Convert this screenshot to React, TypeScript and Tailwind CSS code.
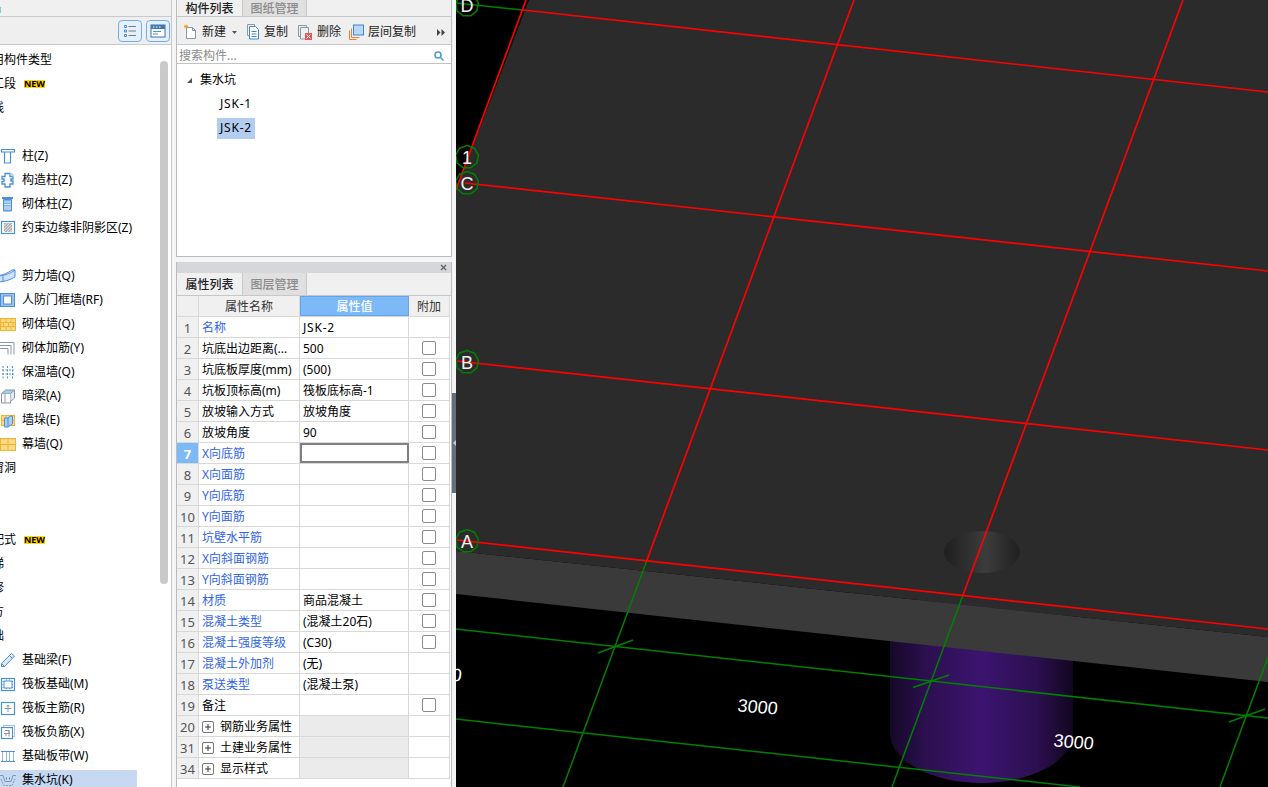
import React from "react";

const BLUE = "#4a8fd8";
const ORANGE = "#f6b326";
const GRAY = "#8a97a6";

// icons of the component tree, all in a 16 box
function TreeIcon({ name }: { name: string }) {
  const icons: Record<string, React.ReactNode> = {
    column: (
      <g fill="none" stroke={BLUE} strokeWidth="1.2">
        <path d="M1.5 1.5h13v2.5h-13z" />
        <path d="M4.5 4v11h6V4" />
      </g>
    ),
    knot: (
      <g fill="#fff" stroke={BLUE} strokeWidth="1.3">
        <path d="M5 1.5h5v3h3v2.5h-2v2h2v3h-3v3H5v-3H2V9.500h2V7H2V4.500h3z" />
        <path d="M10 1.500c2 0 3 1 3 3" stroke="#b8c8da" />
      </g>
    ),
    masonry: (
      <g>
        <path d="M2 1h11v2H2z" fill={BLUE} />
        <path d="M3.500 3.500h8V15h-8z" fill="#7fb2e8" stroke={BLUE} />
        <path d="M4 6h7M4 8.500h7M4 11h7M4 13h7" stroke="#dcebfa" />
      </g>
    ),
    hatch: (
      <g>
        <rect x="1.500" y="1.500" width="13" height="12" fill="#fff" stroke={BLUE} strokeWidth="1.2" />
        <path d="M4 3h8v9H4z" fill="#b5b5b5" />
        <path d="M4 6l3-3M4 9l6-6M4 12l8-8M7 12l5-5M10 12l2-2" stroke="#e6e6e6" strokeWidth=".8" />
      </g>
    ),
    wall: (
      <g fill="#cfe1f5" stroke={BLUE} strokeWidth="1">
        <path d="M-3 8c6 0 12-2 18-6v7c-5 3-11 5-18 5z" />
        <path d="M3 8v6M-3 8c6-1 11-3 15-6h3" fill="none" />
      </g>
    ),
    frame: (
      <g>
        <rect x="0.500" y="1.500" width="14" height="13" fill="#9cc3ee" stroke={BLUE} />
        <rect x="3.500" y="4" width="8" height="8" fill="#fff" stroke={BLUE} />
      </g>
    ),
    brick: (
      <g>
        <rect x="0.500" y="2.500" width="15" height="12" fill="#fdd98a" stroke={ORANGE} />
        <path d="M1 6.500h14M1 10.500h14M6 3v3.500M11 3v3.500M3.500 6.500v4M8.500 6.500v4M13 6.500v4M6 10.500V14M11 10.500V14" stroke={ORANGE} />
      </g>
    ),
    bars: (
      <path d="M-2 2.500h16v12M-2 5.500h13v9M-2 8.500h10v6" fill="none" stroke={GRAY} strokeWidth="1" />
    ),
    dashes: (
      <path d="M3 2v13M7.500 2v13M12.500 2v13M2 6h12M2 10h12" fill="none" stroke={BLUE} strokeWidth="1" strokeDasharray="2 1.500" />
    ),
    beam: (
      <g fill="#fff" stroke={GRAY} strokeWidth="1">
        <path d="M1.500 5.500h9V15h-9z" />
        <path d="M1.500 5.500l4-3.500h9l-4 3.500" fill="#a9c9ee" />
        <path d="M10.500 5.500l4-3.500v8l-4 3.500" fill="#dce8f5" />
        <path d="M5 5.500V15" />
      </g>
    ),
    pier: (
      <g>
        <rect x="1.500" y="3.500" width="13" height="10" fill="#fdd98a" stroke={ORANGE} />
        <path d="M2 8.500h12M6 4v4M11 8.500v5" stroke={ORANGE} />
        <path d="M4.500 6h3.500v9H4.500zM8 6l2-2h2.500v8L8 15" fill="#a8ccf2" stroke={BLUE} />
      </g>
    ),
    curtain: (
      <g>
        <rect x="0.500" y="2.500" width="15" height="12" fill="#fdd98a" stroke={ORANGE} />
        <path d="M1 8.500h14M8 3v11" stroke={ORANGE} />
      </g>
    ),
    pencil: (
      <g fill="#dbe9f8" stroke={BLUE} strokeWidth="1">
        <path d="M1.500 11.500L11.500 1.500l3 2.500L4.500 14.500h-3z" />
        <path d="M1.500 11.500l3 3M9.500 3.500l3 3" />
      </g>
    ),
    raft: (
      <g fill="none" stroke={BLUE}>
        <rect x="1.500" y="2.500" width="13" height="12" strokeWidth="1.200" />
        <rect x="4" y="5" width="8" height="7" />
        <path d="M1.500 5.500h2.500M1.500 8.500h2.500M1.500 11.500h2.500M12 5.500h2.500M12 8.500h2.500M12 11.500h2.500M6.500 2.500V5M9.500 2.500V5M6.500 12v2.500M9.500 12v2.500" strokeDasharray="1 1" />
      </g>
    ),
    cross: (
      <g fill="none">
        <rect x="1.500" y="2.500" width="13" height="12" stroke={BLUE} strokeWidth="1.200" />
        <path d="M8 5v7M4.500 8.500h7M8 5L6.500 6.500M8 5l1.500 1.500" stroke={GRAY} />
      </g>
    ),
    negative: (
      <g fill="#fff" stroke={BLUE}>
        <rect x="3.500" y="1.500" width="11" height="11" stroke="#a8c8ea" />
        <rect x="1.500" y="3.500" width="11" height="11" strokeWidth="1.200" />
        <path d="M5 6.500h4v3M9 6.500v6M4 9.500h6M6 9.500v2.500" fill="none" stroke={GRAY} />
      </g>
    ),
    strip: (
      <g fill="none" stroke={BLUE}>
        <path d="M1 3.500h14M1 13.500h14" strokeWidth="1.200" />
        <path d="M2.500 4v9M6.500 4v9M9.500 4v9M13.500 4v9" stroke="#8fb8e4" />
      </g>
    ),
    pit: (
      <g fill="none" stroke="#7d98b8">
        <path d="M-1 3.500h4l2 6h6l2-6h3" />
        <path d="M1 7l3 6.500h8l3-6.500" strokeDasharray="2 1" />
        <path d="M6.500 5.500v2M9.500 5.500v2" stroke={BLUE} />
      </g>
    ),
  };
  return (
    <svg width="16" height="16" viewBox="0 0 16 16" className="block shrink-0 overflow-visible">
      {icons[name]}
    </svg>
  );
}

type TreeRow =
  | { kind: "blank" }
  | { kind: "group"; text: string; isNew?: boolean }
  | { kind: "item"; text: string; icon: string; selected?: boolean };

const blank: TreeRow = { kind: "blank" };
const group = (text: string, isNew?: boolean): TreeRow => ({ kind: "group", text, isNew });
const item = (text: string, icon: string, selected?: boolean): TreeRow => ({ kind: "item", text, icon, selected });

const treeRows: TreeRow[] = [
  group("常用构件类型"),
  group("施工段", true),
  group("轴线"),
  blank,
  item("柱(Z)", "column"),
  item("构造柱(Z)", "knot"),
  item("砌体柱(Z)", "masonry"),
  item("约束边缘非阴影区(Z)", "hatch"),
  blank,
  item("剪力墙(Q)", "wall"),
  item("人防门框墙(RF)", "frame"),
  item("砌体墙(Q)", "brick"),
  item("砌体加筋(Y)", "bars"),
  item("保温墙(Q)", "dashes"),
  item("暗梁(A)", "beam"),
  item("墙垛(E)", "pier"),
  item("幕墙(Q)", "curtain"),
  group("门窗洞"),
  blank,
  blank,
  group("装配式", true),
  group("楼梯"),
  group("装修"),
  group("土方"),
  group("基础"),
  item("基础梁(F)", "pencil"),
  item("筏板基础(M)", "raft"),
  item("筏板主筋(R)", "cross"),
  item("筏板负筋(X)", "negative"),
  item("基础板带(W)", "strip"),
  item("集水坑(K)", "pit", true),
];

type Prop = { no: number; name: string; value?: string; blue?: boolean; check?: boolean; group?: boolean; active?: boolean };

const props: Prop[] = [
  { no: 1, name: "名称", value: "JSK-2", blue: true },
  { no: 2, name: "坑底出边距离(...", value: "500", check: true },
  { no: 3, name: "坑底板厚度(mm)", value: "(500)", check: true },
  { no: 4, name: "坑板顶标高(m)", value: "筏板底标高-1", check: true },
  { no: 5, name: "放坡输入方式", value: "放坡角度", check: true },
  { no: 6, name: "放坡角度", value: "90", check: true },
  { no: 7, name: "X向底筋", blue: true, check: true, active: true },
  { no: 8, name: "X向面筋", blue: true, check: true },
  { no: 9, name: "Y向底筋", blue: true, check: true },
  { no: 10, name: "Y向面筋", blue: true, check: true },
  { no: 11, name: "坑壁水平筋", blue: true, check: true },
  { no: 12, name: "X向斜面钢筋", blue: true, check: true },
  { no: 13, name: "Y向斜面钢筋", blue: true, check: true },
  { no: 14, name: "材质", value: "商品混凝土", blue: true, check: true },
  { no: 15, name: "混凝土类型", value: "(混凝土20石)", blue: true, check: true },
  { no: 16, name: "混凝土强度等级", value: "(C30)", blue: true, check: true },
  { no: 17, name: "混凝土外加剂", value: "(无)", blue: true },
  { no: 18, name: "泵送类型", value: "(混凝土泵)", blue: true },
  { no: 19, name: "备注", check: true },
  { no: 20, name: "钢筋业务属性", group: true },
  { no: 31, name: "土建业务属性", group: true },
  { no: 34, name: "显示样式", group: true },
];

function LeftPanel() {
  return (
    <div className="w-[172px] shrink-0 h-full flex flex-col border-r border-[#c8cacd] bg-white overflow-hidden">
      <div className="h-[17px] shrink-0 bg-[#f0f0f0] border-b border-[#c8cacd] flex items-center">
        <div className="w-[1px] h-[6px] mt-[4px] bg-[#7fd0d0]" />
      </div>
      <div className="h-[28px] shrink-0 bg-[#efefef] border-b border-[#c8cacd] flex items-center justify-end gap-[4px] pr-[1px]">
        <button className="w-[24px] h-[22px] rounded-[4px] border border-[#72aeef] bg-[#e6f0fb] flex items-center justify-center">
          <svg width="14" height="14" viewBox="0 0 14 14" fill="none" stroke="#4a8fd8">
            <path d="M1.500 1.500h2v2h-2zM1.500 6h2v2h-2zM1.500 10.500h2v2h-2z" />
            <path d="M5.500 2.500H13M5.500 7H13M5.500 11.500H13" stroke="#6a7f96" />
          </svg>
        </button>
        <button className="w-[24px] h-[22px] rounded-[4px] border border-[#72aeef] bg-[#e6f0fb] flex items-center justify-center">
          <svg width="16" height="14" viewBox="0 0 16 14">
            <rect x="1" y="1" width="14" height="12" fill="#fff" stroke="#4a6f96" />
            <path d="M1 1h14v4H1z" fill="#3f78b8" />
            <path d="M3 3h1.500M6 3h1.500M9 3h1.500" stroke="#fff" />
            <path d="M3 7.500h8M3 10h5" stroke="#4a8fd8" />
          </svg>
        </button>
      </div>
      <div className="flex-1 flex min-h-0">
        <div className="w-[160px] shrink-0 pt-[3px]">
          {treeRows.map((row, i) => (
            <div key={i} className="h-[24px] flex items-center text-[12px] text-black whitespace-nowrap">
              {row.kind === "group" && (
                <div className="flex items-center ml-[-20px]">
                  <span>{row.text}</span>
                  {row.isNew && (
                    <span className="ml-[8px] w-[21px] h-[8px] bg-[#ffd800] text-[9px] leading-[8px] font-bold text-center">
                      NEW
                    </span>
                  )}
                </div>
              )}
              {row.kind === "item" && (
                <div className={`flex items-center gap-[6px] h-[20px] w-[137px] ${row.selected ? "bg-[#c6d9f1]" : ""}`}>
                  <TreeIcon name={row.icon} />
                  <span>{row.text}</span>
                </div>
              )}
            </div>
          ))}
        </div>
        <div className="w-[8px] h-[523px] mt-[16px] rounded-[4px] bg-[#c9c9c9]" />
      </div>
    </div>
  );
}

function ToolbarButton({ icon, text }: { icon: React.ReactNode; text: string }) {
  return (
    <div className="flex items-center gap-[4px] text-[12px] text-[#222]">
      {icon}
      <span>{text}</span>
    </div>
  );
}

function Tabs({ first, second, height }: { first: string; second: string; height: string }) {
  return (
    <div className={`flex shrink-0 bg-[#f0f0f0] border-b border-[#c4c6c9] ${height}`}>
      <div className="w-[65px] pt-[2px] flex items-center justify-center text-[12px] font-medium text-[#222]">{first}</div>
      <div className="w-[65px] pt-[2px] mb-[-1px] flex items-center justify-center text-[12px] font-medium text-[#8a8a8a] bg-[#e0e0e0] border-x border-b border-[#c8c8c8]">
        {second}
      </div>
    </div>
  );
}

function ComponentList() {
  return (
    <div className="h-[257px] shrink-0 flex flex-col border-x border-b border-[#b9bbbe] bg-white">
      <Tabs first="构件列表" second="图纸管理" height="h-[17px]" />
      <div className="h-[28px] shrink-0 bg-[#efefef] border-b border-[#c8cacd] flex items-center pt-[3px] pl-[6px] pr-[4px]">
        <ToolbarButton
          text="新建"
          icon={
            <svg width="15" height="16" viewBox="0 0 15 16">
              <path d="M3.500 3.500h6l3 3v8h-9z" fill="#fff" stroke="#8a97a6" />
              <path d="M9.500 3.500v3h3" fill="none" stroke="#8a97a6" />
              <path d="M1 2.500h4M3 .500v4M1.500 1l3 3M4.500 1l-3 3" stroke="#f29a1f" strokeWidth=".9" />
            </svg>
          }
        />
        <svg width="5" height="3" viewBox="0 0 5 3" className="ml-[6px] mr-[9px]">
          <path d="M0 0h5L2.500 3z" fill="#555" />
        </svg>
        <ToolbarButton
          text="复制"
          icon={
            <svg width="14" height="16" viewBox="0 0 14 16" fill="#fff" stroke="#3f86d6">
              <path d="M1.500.500h7v2" stroke="#8a97a6" />
              <path d="M1.500.500v11h2" stroke="#8a97a6" />
              <path d="M3.500 2.500h6l3 3v9.500h-9z" />
              <path d="M5.500 7.500h5M5.500 10h5M5.500 12.500h5" />
            </svg>
          }
        />
        <div className="w-[9px]" />
        <ToolbarButton
          text="删除"
          icon={
            <svg width="16" height="16" viewBox="0 0 16 16" fill="none">
              <path d="M1.500 1.500h8v2" stroke="#8a97a6" />
              <path d="M1.500 1.500v11h2" stroke="#8a97a6" />
              <path d="M3.500 3.500h8v6M3.500 3.500V15h5" stroke="#8a97a6" />
              <rect x="8" y="9" width="7" height="7" fill="#e0545c" />
              <path d="M9.500 10.500l4 4M13.500 10.500l-4 4" stroke="#fff" />
            </svg>
          }
        />
        <div className="w-[8px]" />
        <ToolbarButton
          text="层间复制"
          icon={
            <svg width="15" height="16" viewBox="0 0 15 16" fill="none">
              <path d="M.500 15.500V6.500M.500 15.500h7M2.500 13.500v-9M2.500 13.500h8" stroke="#f0802a" />
              <rect x="4.500" y="1" width="10" height="10" fill="#b9d7f8" stroke="#3f86d6" />
            </svg>
          }
        />
        <svg width="8" height="7" viewBox="0 0 8 7" className="ml-auto mr-[2px]" fill="#444">
          <path d="M0 0l3.500 3.500L0 7zM4.500 0L8 3.500 4.500 7z" />
        </svg>
      </div>
      <div className="h-[19px] shrink-0 border-b border-[#c0c2c5] flex items-center pt-[3px] pl-[2px] pr-[7px]">
        <span className="text-[12px] text-[#8a8a8a] flex-1">搜索构件...</span>
        <svg width="10" height="10" viewBox="0 0 10 10" fill="none" stroke="#4a9acb" strokeWidth="1.500">
          <circle cx="4" cy="4" r="3" />
          <path d="M6.500 6.500L9.500 9.500" />
        </svg>
      </div>
      <div className="flex-1 pt-[4px] text-[12px] text-black">
        <div className="h-[24px] flex items-center pl-[10px]">
          <svg width="5" height="5" viewBox="0 0 5 5" className="mr-[8px]">
            <path d="M5 0v5H0z" fill="#555" />
          </svg>
          <span>集水坑</span>
        </div>
        <div className="h-[24px] flex items-center pl-[43px] tracking-[0.8px]">JSK-1</div>
        <div className="h-[24px] flex items-center pl-[40px]">
          <span className="h-[21px] px-[3px] flex items-center bg-[#b3cdf0] tracking-[0.8px]">JSK-2</span>
        </div>
      </div>
    </div>
  );
}

function PropertyList() {
  return (
    <div className="flex-1 min-h-0 mt-[5px] flex flex-col border-x border-[#b9bbbe] bg-white">
      <div className="h-[11px] shrink-0 bg-[#d5d7da] flex items-center justify-end pr-[4px]">
        <svg width="7" height="7" viewBox="0 0 7 7" stroke="#666" strokeWidth="1.400">
          <path d="M1 1l5 5M6 1L1 6" />
        </svg>
      </div>
      <Tabs first="属性列表" second="图层管理" height="h-[23px]" />
      <div className="text-[12px] leading-[14px] w-[273px]">
        <div className="grid grid-cols-[22px_101px_109px_41px] grid-rows-[20px] h-[21px] border-b border-[#d8d8d8] bg-[#f0f0f0] text-[#333]">
          <div className="border-r border-[#d8d8d8]" />
          <div className="border-r border-[#d8d8d8] pt-[1px] flex items-center justify-center">属性名称</div>
          <div className="bg-[#7db8f7] border border-[#62a5ee] pt-[1px] text-white font-medium flex items-center justify-center">属性值</div>
          <div className="border-r border-[#d8d8d8] pt-[1px] flex items-center justify-center">附加</div>
        </div>
        {props.map((p) => (
          <div key={p.no} className="grid grid-cols-[22px_101px_109px_41px] grid-rows-[20px] h-[21px] border-b border-[#d8d8d8]">
            <div
              className={`border-r border-[#d8d8d8] pt-[1px] text-[13px] leading-[14px] flex items-center justify-center ${
                p.active ? "bg-[#7db8f7] text-white font-bold" : "bg-[#f0f0f0] text-[#555]"
              }`}
            >
              {p.no}
            </div>
            <div className={`border-r border-[#d8d8d8] pt-[1px] flex items-center pl-[3px] whitespace-nowrap overflow-hidden ${p.blue ? "text-[#3264e8]" : "text-black"}`}>
              {p.group && (
                <span className="w-[12px] h-[12px] mr-[6px] shrink-0 rounded-[2px] border border-[#777] flex items-center justify-center">
                  <svg width="6" height="6" viewBox="0 0 6 6" stroke="#333">
                    <path d="M3 0v6M0 3h6" />
                  </svg>
                </span>
              )}
              {p.name}
            </div>
            <div
              className={`flex items-center pl-[3px] pt-[1px] text-black whitespace-nowrap ${
                p.group ? "bg-[#ebebeb]" : ""
              } ${p.active ? "border-2 border-[#808080]" : "border-r border-[#d8d8d8]"} ${
                p.value === "JSK-2" ? "tracking-[0.8px]" : ""
              }`}
            >
              {p.value}
            </div>
            <div className="border-r border-[#d8d8d8] flex items-center justify-center">
              {p.check && <span className="w-[14px] h-[14px] rounded-[2px] border border-[#8a8a8a] bg-white" />}
            </div>
          </div>
        ))}
      </div>
    </div>
  );
}

function Bubble({ x, y, label }: { x: number; y: number; label: string }) {
  const points = Array.from({ length: 9 }, (_, i) => {
    const a = (i * 2 * Math.PI) / 9 - Math.PI / 2;
    return `${(x + 11.5 * Math.cos(a)).toFixed(1)},${(y + 11.5 * Math.sin(a)).toFixed(1)}`;
  }).join(" ");
  return (
    <g>
      <polygon points={points} fill="none" stroke="#008000" strokeWidth="1.500" />
      <text x={x} y={y + 6.500} textAnchor="middle" fontSize="18" fill="#f0f0f0">
        {label}
      </text>
    </g>
  );
}

function Dimension({ x, y }: { x: number; y: number }) {
  return (
    <text
      transform={`translate(${x} ${y}) rotate(5) skewX(-2)`}
      textAnchor="middle"
      fontSize="18"
      fill="#fff"
    >
      3000
    </text>
  );
}

// 3D view of the slab with the pit below it
function Viewport() {
  const red = "#ff0000";
  const green = "#008000";
  return (
    <svg viewBox="456 0 812 787" className="block w-[812px] h-[787px] bg-black font-['Liberation_Sans',sans-serif]">
      <defs>
        <linearGradient id="pit" x1="0" x2="1" y1="0" y2="0">
          <stop offset="0" stopColor="#150828" />
          <stop offset="0.2" stopColor="#2c1050" />
          <stop offset="0.5" stopColor="#3c1470" />
          <stop offset="0.8" stopColor="#2c1050" />
          <stop offset="1" stopColor="#120620" />
        </linearGradient>
        <linearGradient id="hole" x1="0" x2="1" y1="0" y2="0">
          <stop offset="0" stopColor="#1f1f1f" />
          <stop offset="0.55" stopColor="#3c3c3c" />
          <stop offset="1" stopColor="#1f1f1f" />
        </linearGradient>
      </defs>

      <path d="M890 600V733A91.500 50 0 0 0 1073 733V600Z" fill="url(#pit)" />
      <polygon points="456,551 1268,637 1268,682 456,594" fill="#3a3a3a" />
      <polygon points="529,0 1268,0 1268,637 456,551 456,190" fill="#2b2b2b" />
      <ellipse cx="982" cy="552" rx="38" ry="21" fill="url(#hole)" />

      <g stroke={green} strokeWidth="1.500" fill="none">
        <path d="M456 3L523 10" />
        <path d="M647 560L563 787" />
        <path d="M963 595L892 787" />
        <path d="M1268 657L1220 787" />
        <path d="M456 629L1268 718" />
        <path d="M456 719L1080 787" />
        <path d="M598 653L633 640M913 687.500L949 675M1229 722L1265 709" />
      </g>
      <g stroke={red} strokeWidth="1.700" fill="none">
        <path d="M526 0L456 190" />
        <path d="M854 0L647 560" />
        <path d="M1183 0L963 595" />
        <path d="M523 10L1268 92" />
        <path d="M465 183L1268 271" />
        <path d="M457 361L1268 450" />
        <path d="M457 540L1268 629" />
      </g>

      <Bubble x={467} y={5} label="D" />
      <Bubble x={467} y={157} label="1" />
      <Bubble x={467} y={183} label="C" />
      <Bubble x={467} y={362} label="B" />
      <Bubble x={467} y={541} label="A" />

      <Dimension x={757} y={713} />
      <Dimension x={1073} y={748} />
      <Dimension x={441} y={680} />
    </svg>
  );
}

export default function App() {
  return (
    <div className="flex w-[1268px] h-[787px] overflow-hidden bg-[#f4f4f4] font-['Noto_Sans','Noto_Sans_CJK_SC',sans-serif]">
      <LeftPanel />
      <div className="w-[280px] shrink-0 h-full pl-[4px] flex flex-col">
        <ComponentList />
        <PropertyList />
      </div>
      <div className="w-[4px] shrink-0 h-full flex items-center">
        <div className="w-full h-[100px] mt-[98px] bg-[#646e7c] flex items-center justify-center">
          <svg width="3" height="6" viewBox="0 0 3 6">
            <path d="M3 0v6L0 3z" fill="#c8ccd2" />
          </svg>
        </div>
      </div>
      <Viewport />
    </div>
  );
}
